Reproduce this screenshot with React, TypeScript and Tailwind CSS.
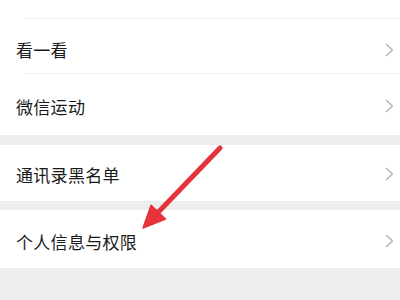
import React from 'react';

const FONT = { fontFamily: '"Noto Sans CJK SC", "Noto Sans", sans-serif' };

const Chevron: React.FC = () => (
  <svg width="9" height="14" viewBox="0 0 9 14" className="shrink-0">
    <polyline points="1.5,1.5 7.5,7 1.5,12.5" fill="none" stroke="#b4b4b4" strokeWidth="1.4" strokeLinejoin="round" strokeLinecap="round" />
  </svg>
);

const Row: React.FC<{ label: string; h: string; pt: string }> = ({ label, h, pt }) => (
  <div className={`flex items-center justify-between bg-white pl-[16px] pr-[6px] ${h} ${pt}`}>
    <span className="text-[17px] leading-none text-[#1a1a1a] tracking-[0.3px]">{label}</span>
    <Chevron />
  </div>
);

const Divider = () => (
  <div className="bg-white pl-[24px]">
    <div className="h-px bg-[#efefef]" />
  </div>
);

export default function App() {
  return (
    <div className="relative w-[400px] h-[300px] overflow-hidden bg-[#ededed]" style={FONT}>
      <div className="h-[18px] bg-white" />
      <Divider />
      <Row label="看一看" h="h-[54px]" pt="pt-[7px]" />
      <Divider />
      <Row label="微信运动" h="h-[61px]" pt="pt-[3px]" />
      <div className="h-[10px]" />
      <Row label="通讯录黑名单" h="h-[56px]" pt="pt-[2px]" />
      <div className="h-[9px]" />
      <Row label="个人信息与权限" h="h-[58px]" pt="pt-[4px]" />

      {/* red annotation arrow */}
      <svg className="absolute inset-0 pointer-events-none" width="400" height="300" viewBox="0 0 400 300">
        <line x1="220" y1="148" x2="157" y2="213.5" stroke="#e5323b" strokeWidth="5" strokeLinecap="round" />
        <polygon points="143,228 165.5,219 151.1,205.2" fill="#e5323b" stroke="#e5323b" strokeWidth="1.5" strokeLinejoin="round" />
      </svg>
    </div>
  );
}
